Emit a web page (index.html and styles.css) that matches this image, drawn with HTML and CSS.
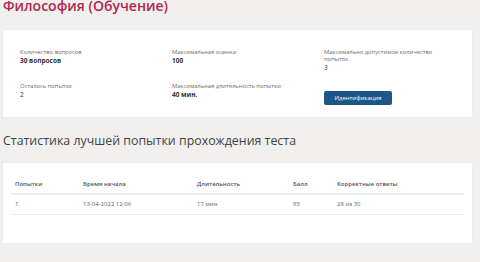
FILE: index.html
```html
<!DOCTYPE html>
<html lang="ru">
<head>
<meta charset="utf-8">
<link rel="stylesheet" href="styles.css">
</head>
<body>
<div class="page">
  <h1 class="title">Философия (Обучение)</h1>
  <section class="card info">
    <div class="info-grid">
      <div class="field">
        <div class="label">Количество вопросов</div>
        <div class="value">30 вопросов</div>
      </div>
      <div class="field">
        <div class="label">Максимальная оценка</div>
        <div class="value">100</div>
      </div>
      <div class="field">
        <div class="label">Максимально допустимое количество<br>попыток</div>
        <div class="value plain">3</div>
      </div>
      <div class="field">
        <div class="label">Осталось попыток</div>
        <div class="value plain">2</div>
      </div>
      <div class="field">
        <div class="label">Максимальная длительность попытки</div>
        <div class="value">40 мин.</div>
      </div>
      <div class="field">
        <button class="btn">Идентификация</button>
      </div>
    </div>
  </section>
  <h2 class="subtitle">Статистика лучшей попытки прохождения теста</h2>
  <section class="card stats">
    <table class="tbl">
      <thead>
        <tr>
          <th class="c1">Попытки</th>
          <th class="c2">Время начала</th>
          <th class="c3">Длительность</th>
          <th class="c4">Балл</th>
          <th class="c5">Корректные ответы</th>
        </tr>
      </thead>
      <tbody>
        <tr>
          <td>1</td>
          <td>13-04-2022 12:06</td>
          <td>17 мин</td>
          <td>93</td>
          <td>28 из 30</td>
        </tr>
      </tbody>
    </table>
  </section>
</div>
</body>
</html>
```

FILE: styles.css
```css
html, body {
  margin: 0;
  padding: 0;
  background: #f1f0ee;
}
body {
  font-family: "Open Sans", "Noto Sans", sans-serif;
  color: #555;
  width: 480px;
  height: 262px;
  overflow: hidden;
}
.page {
  padding: 0 8px 0 3px;
}
.title {
  margin: -3px 0 0 0;
  font-size: 14px;
  line-height: 18px;
  font-weight: 600;
  color: #b0264e;
}
.card {
  background: #fff;
  box-shadow: 0 0 2px rgba(0,0,0,0.05);
}
.info {
  margin-top: 15px;
  height: 87px;
  box-sizing: border-box;
  padding: 19px 10px 0 17px;
}
.info-grid {
  display: grid;
  grid-template-columns: 152px 152px 1fr;
  grid-template-rows: 24px auto;
  row-gap: 10px;
}
.label {
  font-size: 5.8px;
  line-height: 7px;
  color: #6a6a6a;
}
.value {
  font-size: 6.5px;
  line-height: 9px;
  font-weight: 700;
  color: #333;
}
.value.plain {
  font-weight: 400;
}
.btn {
  display: inline-block;
  background: #1d5688;
  color: #fff;
  border: none;
  border-radius: 2px;
  font-family: "Open Sans", "Noto Sans", sans-serif;
  font-size: 6px;
  line-height: 14px;
  height: 14px;
  padding: 0;
  width: 68px;
}
.subtitle {
  margin: 15px 0 0 0;
  font-size: 12.4px;
  line-height: 18px;
  font-weight: 400;
  color: #444;
}
.stats {
  margin-top: 13px;
  height: 80px;
  box-sizing: border-box;
  padding: 12px 8px 0 7px;
}
.tbl {
  width: 100%;
  border-collapse: collapse;
  font-size: 6px;
}
.tbl th {
  text-align: left;
  font-weight: 600;
  color: #555;
  padding: 5px;
  border-bottom: 2px solid #eeeeee;
  line-height: 8px;
}
.tbl td {
  padding: 5px 5px 6px 5px;
  line-height: 8px;
  color: #666;
  border-bottom: 1px solid #eeeeee;
}
.c1 { width: 58px; }
.c2 { width: 104px; }
.c3 { width: 86px; }
.c4 { width: 34px; }
```
